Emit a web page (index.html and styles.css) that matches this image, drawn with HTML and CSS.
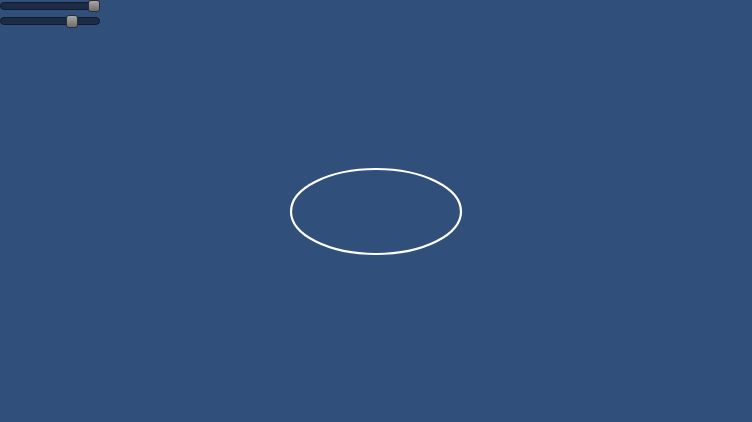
FILE: index.html
```html
<!DOCTYPE html>
<html>
<head>
<meta charset="utf-8">
<link rel="stylesheet" href="styles.css">
</head>
<body>
<div class="controls">
  <div class="slider"><div class="track"></div><div class="thumb" style="left:88px"></div></div>
  <div class="slider"><div class="track"></div><div class="thumb" style="left:66px"></div></div>
</div>
<div class="stage">
  <svg class="shape" width="174" height="89" viewBox="0 0 174 89">
    <ellipse cx="87" cy="44.5" rx="85" ry="42.5" fill="none" stroke="#ffffff" stroke-width="2.2"/>
  </svg>
</div>
</body>
</html>
```
FILE: styles.css
```css
html, body {
  margin: 0;
  padding: 0;
  width: 100%;
  height: 100%;
  background: #304f7a;
  overflow: hidden;
  font-family: "Liberation Sans", sans-serif;
}
.controls {
  position: absolute;
  top: 0;
  left: 0;
  display: flex;
  flex-direction: column;
  gap: 3px;
}
.slider {
  position: relative;
  width: 100px;
  height: 13px;
}
.slider:first-child { height: 12px; }
.track {
  position: absolute;
  left: 0;
  right: 0;
  top: 2px;
  height: 6px;
  border-radius: 4px;
  background: #1c2c47;
  border: 1px solid #111b2c;
}
.slider:last-child .track { top: 2px; }
.thumb {
  position: absolute;
  top: 0;
  width: 10px;
  height: 10px;
  border-radius: 3px;
  border: 1px solid #2a2e33;
  background: linear-gradient(#a8a8a8, #8a8a8a 50%, #6e6e6e);
}
.slider:last-child .thumb { height: 11px; }
.stage {
  width: 100%;
  height: 100%;
  display: flex;
  align-items: center;
  justify-content: center;
}
.shape { display: block; }
```
